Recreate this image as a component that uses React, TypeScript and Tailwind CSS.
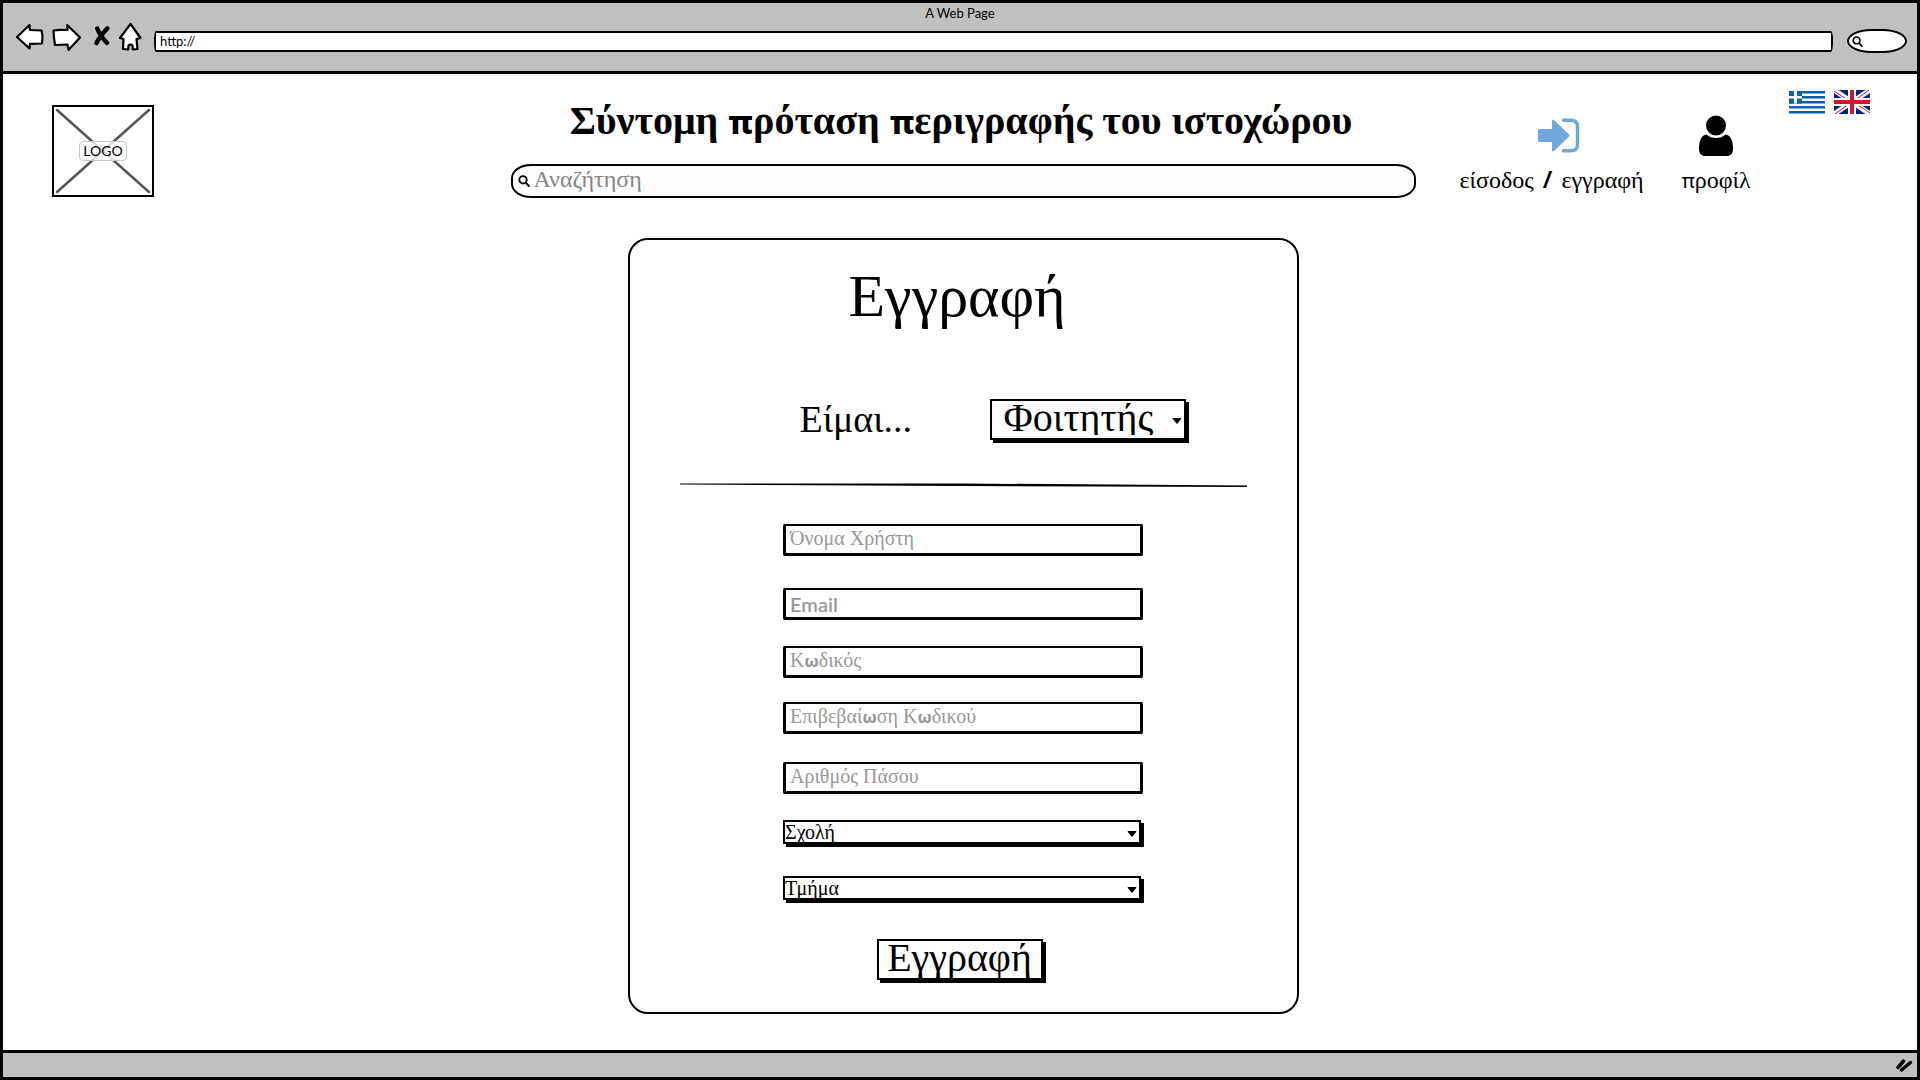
import React from "react";

const SERIF = "font-['Liberation_Serif',serif]";
const HAND = "font-['Lato','Noto_Sans',sans-serif]";

/** Greek text in the serif face, with the given letters drawn in a sans face. */
function Greek({ text, letters, className }: { text: string; letters: string; className: string }) {
  return (
    <>
      {text.split("").map((c, i) =>
        letters.includes(c) ? (
          <span key={i} className={className}>
            {c}
          </span>
        ) : (
          c
        ),
      )}
    </>
  );
}

function SearchIcon({ className }: { className: string }) {
  return (
    <svg viewBox="0 0 12 12" className={className} fill="none" stroke="#000" strokeLinecap="round" aria-hidden="true">
      <circle cx="5" cy="4.8" r="3.7" strokeWidth="1.8" />
      <path d="M7.8 7.8 10.8 11" strokeWidth="2" />
    </svg>
  );
}

function BrowserBar() {
  const btn = "flex h-8 items-center justify-center";
  return (
    <header className="h-[71px] shrink-0 border-b-[3px] border-black bg-[#c0c0c0]">
      <p className={`${HAND} h-[18px] text-center text-[13px] leading-5`}>A Web Page</p>
      <div className="flex items-start pr-[10px] pl-3">
        <nav className="flex h-8 items-center" aria-label="Browser">
          <button className={btn} aria-label="Back">
            <svg width="30" height="28" viewBox="0 0 30 28" fill="#fff" stroke="#000" strokeWidth="2.2" strokeLinejoin="round">
              <path d="M2 14 14.500 2 15 7 26.500 7.500 27.500 13 27 20.500 15 20.800 14.500 25.500Z" />
            </svg>
          </button>
          <button className={`${btn} ml-[7px]`} aria-label="Forward">
            <svg width="30" height="28" viewBox="0 0 30 28" fill="#fff" stroke="#000" strokeWidth="2.200" strokeLinejoin="round">
              <path d="M1.500 7.500 8 6.800 15.500 7 15.200 2 28 14.500 16.500 27 15.500 21.500 3 22 2 15Z" />
            </svg>
          </button>
          <button className={`${btn} ml-3`} aria-label="Stop">
            <svg width="16" height="28" viewBox="0 0 16 28" fill="none" stroke="#000" strokeLinecap="round">
              <path d="M3.200 5.500C5 10 9 16 13 19.800M13.200 5.500C9 10 5 15 2.500 20" strokeWidth="4.500" />
            </svg>
          </button>
          <button className={`${btn} ml-2`} aria-label="Home">
            <svg width="24" height="30" viewBox="0 0 24 30" fill="#fff" stroke="#000" strokeWidth="2.200" strokeLinejoin="round">
              <path d="M12.500 2 22.500 16 18.500 17 19.500 27 14.800 27.500 14.500 23.500Q12.500 21.500 10.500 23.500L10.200 27.500 5 27 5.500 17 2 16Z" />
            </svg>
          </button>
        </nav>
        <input
          aria-label="Address"
          defaultValue="http://"
          className={`${HAND} mt-[10px] ml-3 h-[21px] min-w-0 flex-1 rounded-[2px/9px] border-2 border-black bg-white px-1 pb-[2px] text-[13px] outline-none`}
        />
        <label className="mt-2 ml-[14px] flex h-6 w-[60px] items-center rounded-[40%/50%] border-2 border-black bg-white pl-[3px]">
          <SearchIcon className="h-[11px] w-[11px] shrink-0" />
          <input aria-label="Web search" className="w-full min-w-0 bg-transparent outline-none" />
        </label>
      </div>
    </header>
  );
}

function Logo() {
  return (
    <a href="#" className="mt-[31px] ml-[43px] grid h-[92px] w-[102px] place-items-center border-2 border-black text-black">
      <svg viewBox="0 0 98 88" className="col-start-1 row-start-1 h-full w-full" stroke="#555" strokeWidth="2.500" strokeLinecap="round" aria-hidden="true">
        <path d="M3 3 95 85M95 3 3 85" />
      </svg>
      <span className={`${HAND} col-start-1 row-start-1 h-5 rounded border border-[#c8c8c8] bg-white/80 px-[3px] text-sm leading-[18px]`}>LOGO</span>
    </a>
  );
}

function GreekFlag() {
  return (
    <svg width="36" height="24" viewBox="0 0 36 24" aria-hidden="true">
      <path fill="#fff" d="M0 0h36v24H0z" />
      <path fill="#0d5eaf" d="M0 1h36v2.600H0zM0 6h36v2.600H0zM0 11h36v2.600H0zM0 16h36v2.600H0zM0 21h36v2.600H0z" />
      <path fill="#0d5eaf" d="M0 1h13v12.600H0z" />
      <path fill="#fff" d="M5 1h3v12.600H5zM0 6h13v2.600H0z" />
    </svg>
  );
}

function UkFlag() {
  return (
    <svg width="36" height="24" viewBox="0 0 36 24" aria-hidden="true">
      <path fill="#00247d" d="M0 0h36v24H0z" />
      <path stroke="#fff" strokeWidth="5" d="M0 0 36 24M36 0 0 24" />
      <path stroke="#cf142b" strokeWidth="1" d="M0 1 15 11M36 23 21 13M35 0 21 10M1 24 15 14" />
      <path fill="#fff" d="M14 0h8v24h-8zM0 8h36v8H0z" />
      <path fill="#cf142b" d="M16 0h4v24h-4zM0 10h36v4H0z" />
    </svg>
  );
}

function SiteHeader() {
  return (
    <div className="grid grid-cols-[1fr_905px_1fr] pl-[6px]">
      <Logo />
      <div>
        <h1 className={`${SERIF} mt-[23px] mr-1 text-center text-[40px] leading-[48px] font-bold whitespace-nowrap`}>
          <Greek text="Σύντομη πρόταση περιγραφής του ιστοχώρου" letters="π" className="font-['Noto_Sans',sans-serif] text-[32px] leading-[48px] font-extrabold" />
        </h1>
        <label className="mt-[18px] flex h-[34px] items-center rounded-[20px/14px] border-2 border-black bg-[#fdfdfd] pl-[5px]">
          <SearchIcon className="h-3 w-3 shrink-0" />
          <input
            aria-label="Αναζήτηση"
            placeholder="Αναζήτηση"
            className={`${SERIF} ml-1 h-7 w-full bg-transparent pb-1 text-2xl leading-6 outline-none placeholder:text-[#85858a]`}
          />
        </label>
      </div>
      <div className={`${SERIF} flex items-start pr-[47px] pl-11 text-2xl leading-7 whitespace-nowrap`}>
        <a href="#" className="mt-[39px] flex flex-col items-center">
          <svg width="44" height="44" viewBox="0 0 44 44" className="ml-3" aria-hidden="true">
            <path fill="#6fa8dc" d="M2 17.500Q2 16 3.500 16H16V8Q16 5.500 18 7L33 21.500Q34 22.500 33 23.500L18 38Q16 39.500 16 37V29H3.500Q2 29 2 27.500Z" />
            <path fill="none" stroke="#6fa8dc" strokeWidth="3.400" strokeLinecap="round" d="M27.500 7.200H35Q41.500 7.200 41.500 13.500V31.500Q41.500 37.800 35 37.800H27.500" />
          </svg>
          <span className="mt-[9px]">
            είσοδος <span className="mx-[3px] font-['Noto_Sans',sans-serif] leading-6 font-semibold">/</span> εγγραφή
          </span>
        </a>
        <a href="#" className="mt-[39px] ml-[38px] flex flex-col items-center">
          <svg width="36" height="44" viewBox="0 0 36 44" aria-hidden="true">
            <circle cx="18" cy="12.500" r="10" />
            <path d="M8.500 21.500Q12.500 25 18 25Q23.500 25 27.500 21.500Q35 22.500 35 36Q35 43 29 43H7Q1 43 1 36Q1 22.500 8.500 21.500Z" />
          </svg>
          <span className="mt-[9px]">
            <Greek text="προφίλ" letters="π" className="font-['Noto_Sans',sans-serif] text-xl leading-6" />
          </span>
        </a>
        <div className="mt-4 ml-auto flex gap-[9px]">
          <button aria-label="Ελληνικά"><GreekFlag /></button>
          <button aria-label="English"><UkFlag /></button>
        </div>
      </div>
    </div>
  );
}

function Field({ id, label, type = "text", gap, sans }: { id: string; label: string; type?: string; gap: string; sans?: boolean }) {
  return (
    <div className={`${gap} grid h-8 w-[360px] items-center`}>
      <input
        id={id}
        type={type}
        placeholder=" "
        className="peer col-start-1 row-start-1 h-8 w-full rounded-[1px/4px] border-[3px] border-t-2 border-black bg-white px-1 text-xl outline-none"
      />
      <label
        htmlFor={id}
        className={`${sans ? HAND : SERIF} ${sans ? "font-semibold" : "pb-1"} invisible col-start-1 row-start-1 pl-[7px] text-xl leading-6 text-[#999] peer-placeholder-shown:visible`}
      >
        <Greek text={label} letters="ω" className="font-['Noto_Sans',sans-serif] text-base leading-6 font-extrabold" />
      </label>
    </div>
  );
}

function Caret() {
  return (
    <svg width="10" height="6" viewBox="0 0 10 6" className="pointer-events-none col-start-1 row-start-1 mt-1 mr-[2px] justify-self-end" aria-hidden="true">
      <path d="M1 0.500H9L5 5.500Z" stroke="#000" strokeLinejoin="round" />
    </svg>
  );
}

function SmallSelect({ label, gap }: { label: string; gap: string }) {
  return (
    <div className={`${gap} mr-[2px] grid h-6 w-[358px] items-center border-2 border-black bg-white shadow-[3px_3px_0_#000]`}>
      <select
        aria-label={label}
        className={`${SERIF} col-start-1 row-start-1 -mt-[5px] -mb-[2px] h-[26px] appearance-none text-xl outline-none`}
      >
        <option>{label}</option>
      </select>
      <Caret />
    </div>
  );
}

function SignUpCard() {
  return (
    <form className={`${SERIF} mt-10 flex w-[671px] flex-col items-center rounded-[20px] border-2 border-black bg-white pb-8`}>
      <h2 className="mt-5 mr-3 text-[60px] leading-[72px]">Εγγραφή</h2>
      <div className="mt-16 ml-[62px] flex w-[389px] items-center justify-between">
        <label htmlFor="role" className="text-[38px] leading-[46px]">Είμαι...</label>
        <div className="mr-[3px] grid h-[41px] w-[196px] items-center border-2 border-black bg-white shadow-[3px_3px_0_#000]">
          <select id="role" className="col-start-1 row-start-1 -mt-[13px] mb-[3px] h-[47px] appearance-none pl-3 text-[40px] outline-none">
            <option>Φοιτητής</option>
          </select>
          <Caret />
        </div>
      </div>
      <svg className="mt-[41px] h-1 w-[567px]" viewBox="0 0 567 4" preserveAspectRatio="none" aria-hidden="true">
        <path d="M0 0.500 283 0.500 567 2.500V4L283 3 0 1.500Z" />
      </svg>
      <Field id="username" label="Όνομα Χρήστη" gap="mt-[37px]" />
      <Field id="email" label="Email" type="email" gap="mt-8" sans />
      <Field id="password" label="Κωδικός" type="password" gap="mt-[26px]" />
      <Field id="confirm" label="Επιβεβαίωση Κωδικού" type="password" gap="mt-6" />
      <Field id="pass-number" label="Αριθμός Πάσου" gap="mt-7" />
      <SmallSelect label="Σχολή" gap="mt-[26px]" />
      <SmallSelect label="Τμήμα" gap="mt-8" />
      <button type="submit" className="mt-[39px] mr-[7px] flex h-[41px] w-[166px] items-center justify-center border-2 border-black pb-1 text-[40px] leading-9 shadow-[3px_3px_0_#000]">
        Εγγραφή
      </button>
    </form>
  );
}

export default function App() {
  return (
    <div className="flex min-h-screen flex-col border-[3px] border-black bg-white text-black">
      <BrowserBar />
      <main className="flex-1 pb-8">
        <SiteHeader />
        <div className="flex justify-center pl-[6px]">
          <SignUpCard />
        </div>
      </main>
      <footer className="flex h-[27px] shrink-0 items-center justify-end border-t-[3px] border-black bg-[#c0c0c0] pr-1">
        <svg width="18" height="16" viewBox="0 0 18 16" stroke="#000" strokeWidth="3.500" strokeLinecap="round" aria-hidden="true">
          <path d="M3 10.500 8.500 4M6.500 13 15.500 5.500" />
        </svg>
      </footer>
    </div>
  );
}
